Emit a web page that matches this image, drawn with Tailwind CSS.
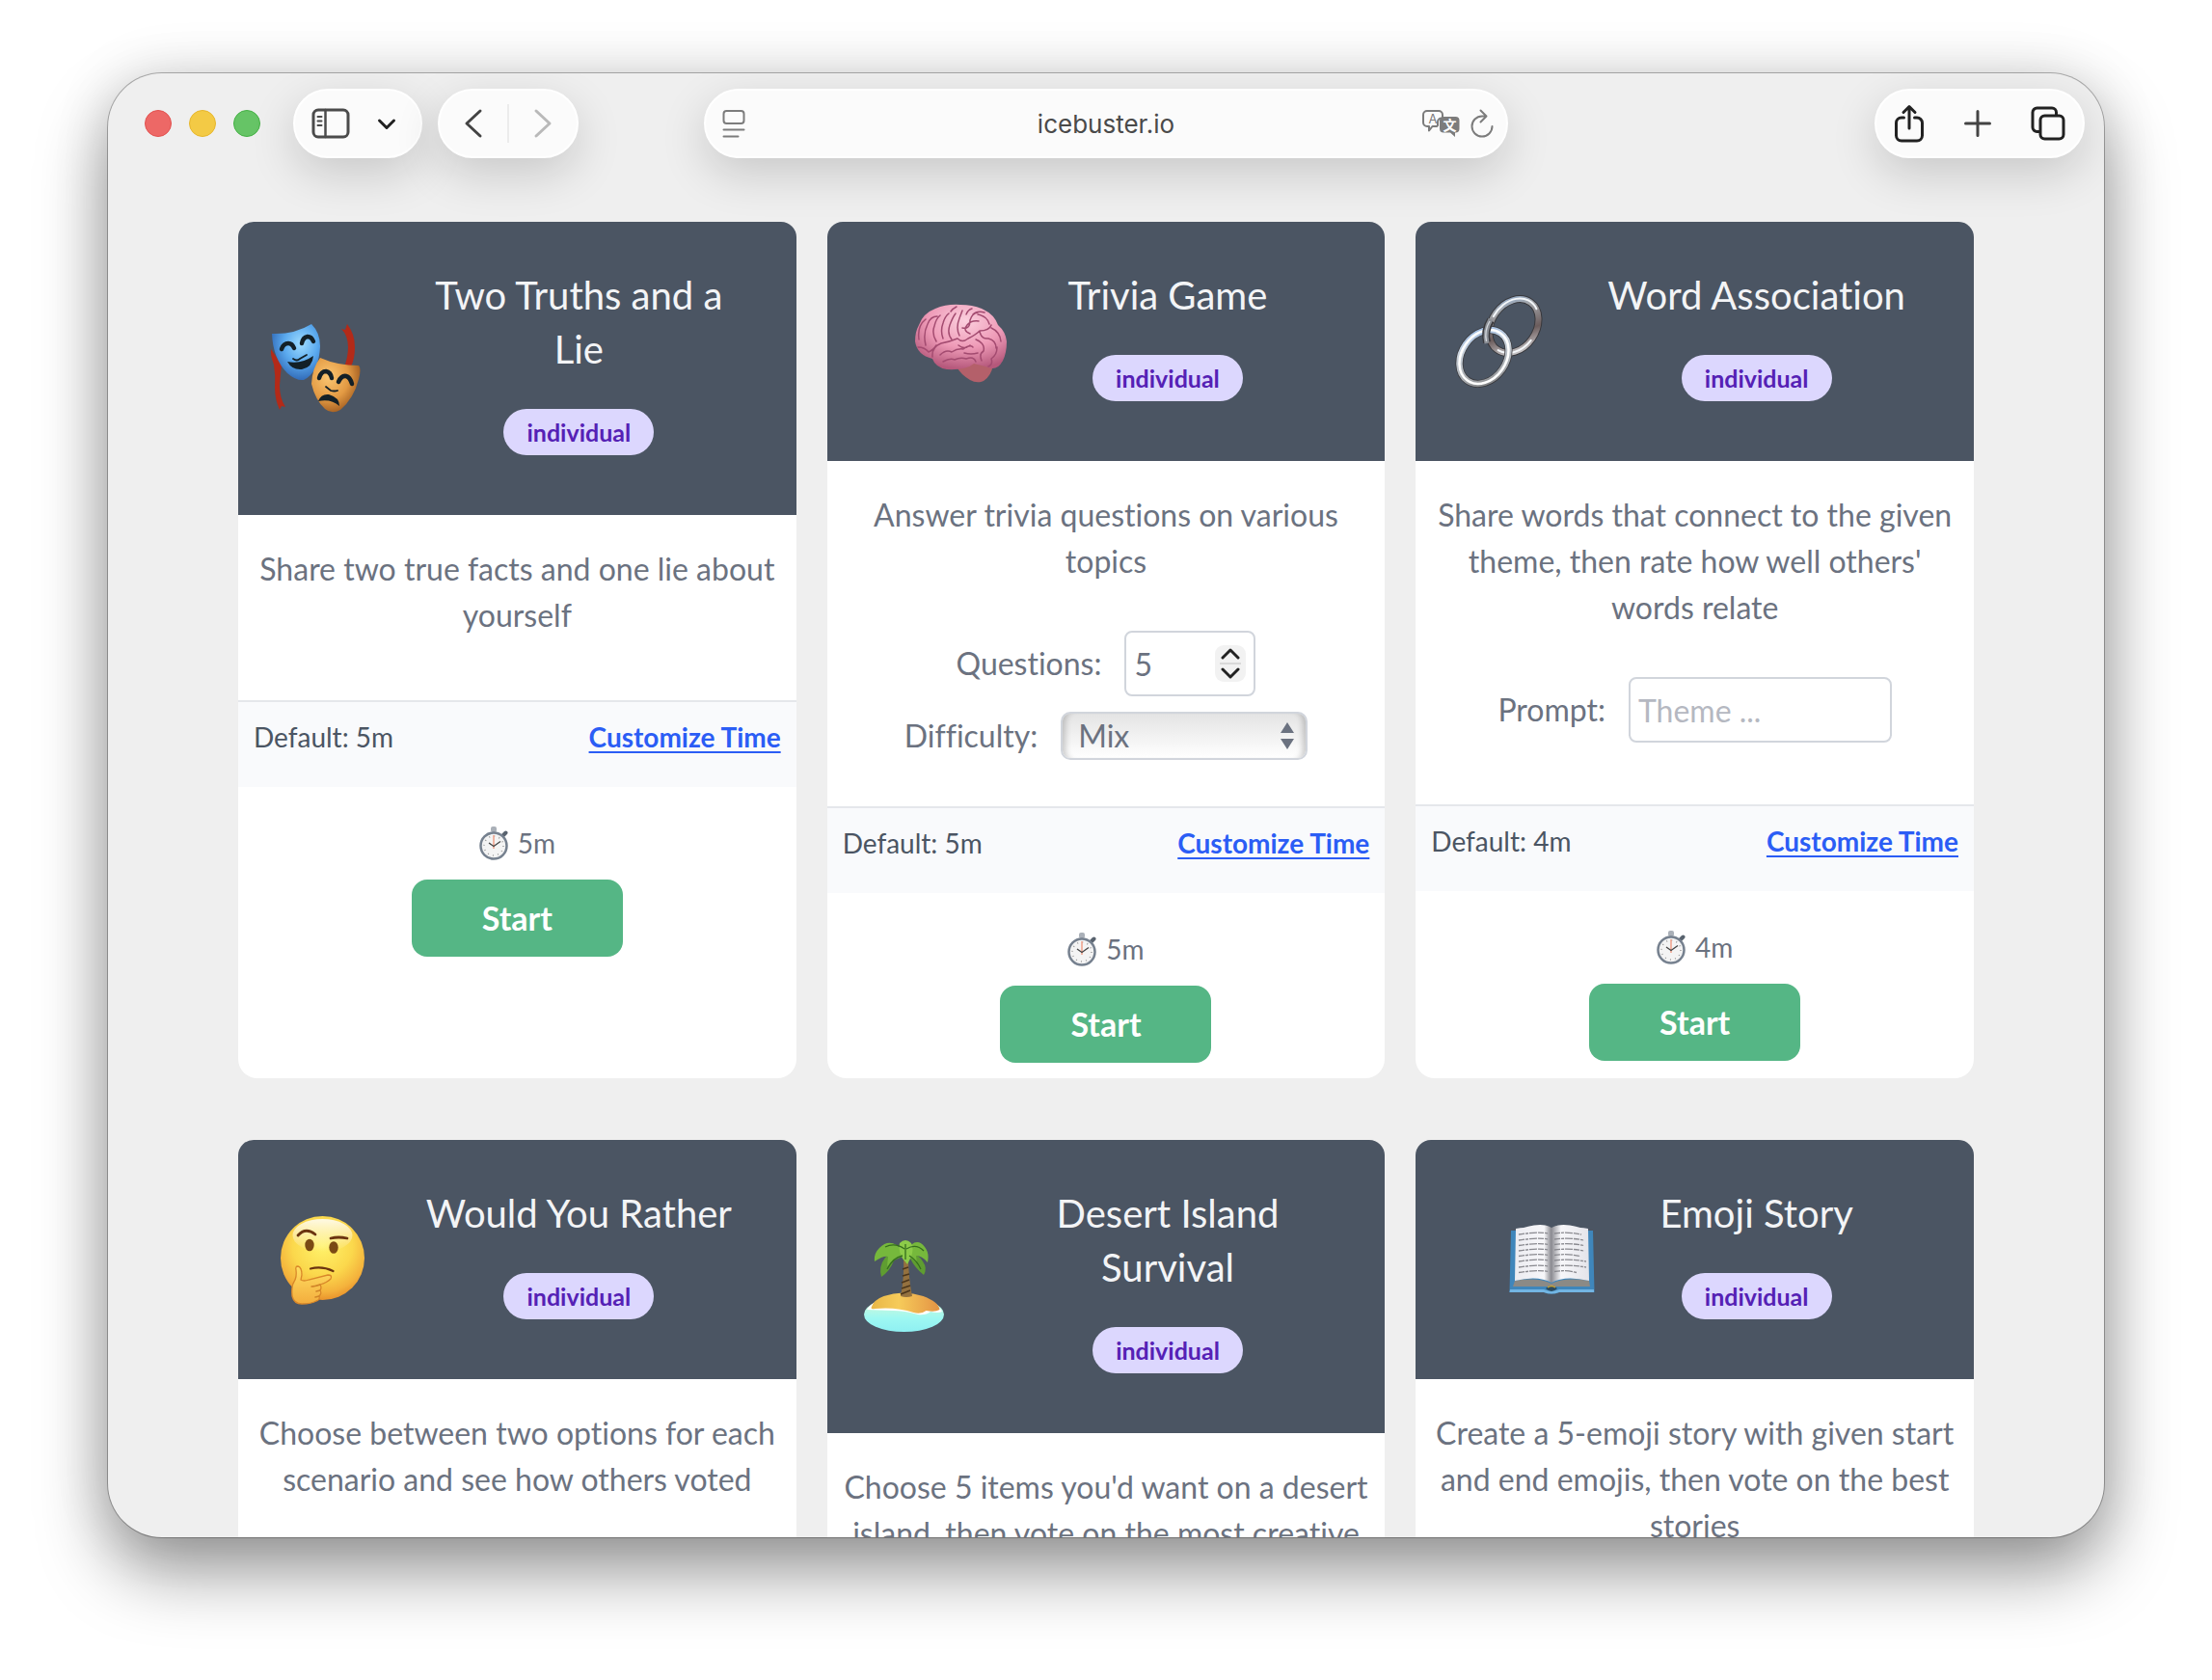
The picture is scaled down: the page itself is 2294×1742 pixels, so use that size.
<!DOCTYPE html>
<html lang="en">
<head>
<meta charset="utf-8">
<meta name="viewport" content="width=device-width, initial-scale=1">
<title>icebuster.io</title>
<script src="https://cdn.jsdelivr.net/npm/@tailwindcss/browser@4"></script>
</head>
<body class="bg-white font-['Lato',sans-serif] [font-variant-ligatures:no-common-ligatures]">

<!-- Shared drawings -->
<svg class="hidden" aria-hidden="true">
  <symbol id="stopwatch" viewBox="0 0 30 36">
    <rect x="12" y="1" width="6" height="6" rx="2" fill="#aab0b8"/>
    <path d="M25 10l2.500-2.500" stroke="#59636f" stroke-width="4" stroke-linecap="round"/>
    <circle cx="15" cy="21" r="13.500" fill="#f4f4f4" stroke="#76818f" stroke-width="2.500"/>
    <circle cx="15" cy="21" r="10" fill="none" stroke="#9b9b9b" stroke-width="1.500" stroke-dasharray="1 4.236"/>
    <path d="M15 24V10" stroke="#f0a08a" stroke-width="1.500"/>
    <path d="M10 18l5 3.500 7-5" fill="none" stroke="#444" stroke-width="1.300"/>
  </symbol>
</svg>

<div class="flex h-screen flex-col px-28 pt-19 pb-37">
  <div class="relative flex min-h-0 flex-1 flex-col overflow-hidden rounded-[56px] bg-[#efefef] shadow-[0_0_0_1px_rgba(0,0,0,0.28),0_36px_72px_rgba(0,0,0,0.40),0_0_60px_rgba(0,0,0,0.12)]">

    <!-- Browser toolbar -->
    <header class="grid shrink-0 grid-cols-[1fr_834px_1fr] items-center px-5 pt-4 font-['Inter',sans-serif]">
      <div class="flex items-center gap-4 pl-[18px]">
        <div class="mr-[18px] flex gap-[18px]">
          <button type="button" aria-label="Close" class="size-7 rounded-full border border-[#e2514f] bg-[#ed6866]"></button>
          <button type="button" aria-label="Minimize" class="size-7 rounded-full border border-[#e6b62c] bg-[#f3ca45]"></button>
          <button type="button" aria-label="Zoom" class="size-7 rounded-full border border-[#45b045] bg-[#66c466]"></button>
        </div>
        <div class="flex h-18 w-[134px] items-center rounded-full border-2 border-white bg-[#fbfbfb] pl-[17px] shadow-[0_16px_48px_rgba(0,0,0,0.16)]">
          <button type="button" aria-label="Sidebar" class="w-10">
            <svg class="block h-8 w-10" viewBox="0 0 40 32" fill="none" stroke="#4b4b4b" stroke-linecap="round">
              <rect x="2" y="2" width="36" height="28" rx="5" stroke-width="3"/>
              <path d="M14.500 2v28" stroke-width="2.500"/>
              <path d="M6.500 9h4M6.500 13.500h4M6.500 18h4" stroke-width="2"/>
            </svg>
          </button>
          <button type="button" aria-label="Tab groups" class="ml-7 w-5">
            <svg class="block h-5 w-5" viewBox="0 0 20 20" fill="none" stroke="#222" stroke-width="3" stroke-linecap="round" stroke-linejoin="round"><path d="M2.500 7L10 14.500 17.500 7"/></svg>
          </button>
        </div>
        <div class="flex h-18 w-[146px] items-center justify-between rounded-full border-2 border-white bg-[#fbfbfb] px-[25px] shadow-[0_16px_48px_rgba(0,0,0,0.16)]">
          <button type="button" aria-label="Back"><svg class="block h-8 w-5" viewBox="0 0 20 32" fill="none" stroke="#444" stroke-width="3" stroke-linecap="round" stroke-linejoin="round"><path d="M17 3L3 16l14 13"/></svg></button>
          <span class="h-10 w-0.5 bg-[#ececec]"></span>
          <button type="button" aria-label="Forward"><svg class="block h-8 w-5" viewBox="0 0 20 32" fill="none" stroke="#b9b9b9" stroke-width="3" stroke-linecap="round" stroke-linejoin="round"><path d="M3 3l14 13L3 29"/></svg></button>
        </div>
      </div>

      <div class="grid h-18 grid-cols-[96px_1fr_96px] items-center rounded-full border-2 border-white bg-[#fbfbfb] shadow-[0_16px_48px_rgba(0,0,0,0.16)]">
        <button type="button" aria-label="Page menu" class="pl-[17px]">
          <svg class="block h-8 w-6" viewBox="0 0 24 32" fill="none" stroke="#7c7c7c" stroke-width="2" stroke-linecap="round"><rect x="1.500" y="3" width="21" height="13" rx="3"/><path d="M1.500 22.500h21M1.500 29.500h15"/></svg>
        </button>
        <input type="text" aria-label="Address" value="icebuster.io" class="w-full min-w-0 bg-transparent text-center text-[26px] text-[#4a4a4a] outline-none">
        <div class="flex items-center justify-end gap-2.5 pr-[13px]">
          <button type="button" aria-label="Translate">
            <svg class="block h-8 w-10" viewBox="0 0 40 32" fill="none">
              <path d="M5 3h12a4 4 0 0 1 4 4v3.500h-1a4 4 0 0 0-4 4V18l-1 1h-4.500L7 23.500V19H5a4 4 0 0 1-4-4V7a4 4 0 0 1 4-4z" stroke="#7c7c7c" stroke-width="2" stroke-linejoin="round"/>
              <text x="11" y="16" text-anchor="middle" font-family="Inter, sans-serif" font-size="13" fill="#7c7c7c">A</text>
              <path d="M22 9h12.500a4 4 0 0 1 4 4v8.500a4 4 0 0 1-4 4H34V30l-5-4.500h-7a4 4 0 0 1-4-4V13a4 4 0 0 1 4-4z" fill="#7c7c7c"/>
              <text x="28.500" y="22.500" text-anchor="middle" font-family="Noto Sans CJK SC, sans-serif" font-weight="700" font-size="14" fill="#fff">文</text>
            </svg>
          </button>
          <button type="button" aria-label="Reload">
            <svg class="block h-8 w-6" viewBox="0 0 24 32" fill="none" stroke="#7c7c7c" stroke-width="2" stroke-linecap="round" stroke-linejoin="round"><path d="M12 8.500a10.500 10.500 0 1 0 10.500 10.500M10.500 2.500l6 6-6 6M12 8.500h4"/></svg>
          </button>
        </div>
      </div>

      <div class="flex h-18 w-[218px] items-center justify-between justify-self-end rounded-full border-2 border-white bg-[#fbfbfb] px-[18px] shadow-[0_16px_48px_rgba(0,0,0,0.16)]">
        <button type="button" aria-label="Share"><svg class="block h-10 w-8" viewBox="0 0 32 40" fill="none" stroke="#222" stroke-width="3" stroke-linecap="round" stroke-linejoin="round"><path d="M10.500 14H8a5.500 5.500 0 0 0-5.500 5.500v13A5.500 5.500 0 0 0 8 38h16a5.500 5.500 0 0 0 5.500-5.500v-13A5.500 5.500 0 0 0 24 14h-2.500M16 25V3M10 8.500L16 2.500l6 6"/></svg></button>
        <button type="button" aria-label="New tab"><svg class="block size-7" viewBox="0 0 28 28" fill="none" stroke="#444" stroke-width="3" stroke-linecap="round"><path d="M14 1.500v25M1.500 14h25"/></svg></button>
        <button type="button" aria-label="Tab overview"><svg class="block size-9" viewBox="0 0 36 36" fill="none" stroke="#222" stroke-width="3" stroke-linejoin="round"><rect x="10" y="10" width="24" height="24" rx="4.500"/><path d="M10 26.500H6.500A4.500 4.500 0 0 1 2 22V6.500A4.500 4.500 0 0 1 6.500 2H22a4.500 4.500 0 0 1 4.500 4.500V10"/></svg></button>
      </div>
    </header>

    <!-- Game cards -->
    <main class="mx-auto grid w-full max-w-[1800px] grid-cols-3 gap-x-8 gap-y-16 pt-[66px] text-center text-[32px] leading-12 text-[#6b7280]">

      <article class="flex flex-col rounded-[20px] bg-white">
        <div class="flex items-center justify-center gap-8 rounded-t-2xl bg-[#4b5563] px-8 py-12">
          <svg class="size-24 shrink-0 overflow-visible" viewBox="0 0 96 96" role="img" aria-label="Theatre masks">
            <defs>
              <radialGradient id="mb" cx=".6" cy=".35" r=".7"><stop offset="0" stop-color="#9fdcff"/><stop offset=".5" stop-color="#5aa9ee"/><stop offset="1" stop-color="#2c62b0"/></radialGradient>
              <radialGradient id="mo" cx=".35" cy=".35" r=".75"><stop offset="0" stop-color="#fbc672"/><stop offset=".55" stop-color="#e39a43"/><stop offset="1" stop-color="#93501a"/></radialGradient>
            </defs>
            <path d="M2 28q-1 6 3 16 2 12 1 24 0 12 5 23l2-4 4 1q-6-9-6-22 1-13 2-22z" fill="#b32a18"/>
            <path d="M75 7l4 1 2-6q8 10 8 24 0 12-4 20l-6-2q3-10 3-18 0-12-7-19z" fill="#b32a18"/>
            <path d="M3 12Q26 13 44 2q9 9 9 23-1 27-17 35-8 1-17-7Q4 38 3 12z" fill="url(#mb)"/>
            <path d="M53 37q18 8 40 8 3 3 0 14-5 20-19 32-9 5-16-1-10-9-14-26 1-17 9-27z" fill="url(#mo)"/>
            <g fill="none" stroke="#132027" stroke-linecap="round">
              <path d="M13 28q2-6 7-6 4 0 6 5M34 22q1-6 6-7 4 0 6 5M52 58q2-7 7-7 5 1 6 7M72 62q3-7 8-6 4 1 6 8" stroke-width="4.500"/>
              <path d="M25 38q4 3 7 0l7-4M59 67l5 4q4 1 7 0" stroke-width="1.800"/>
            </g>
            <path d="M19 41q14 3 27-6-1 12-12 14-10 1-15-8zM51 82q3-8 11-7 11 3 11 12-9-8-22-5z" fill="#132027"/>
          </svg>
          <div class="px-8 pb-3.5">
            <h2 class="text-[40px] leading-14 text-gray-100">Two Truths and a Lie</h2>
            <span class="mx-auto mt-[34px] block h-12 w-fit rounded-full bg-[#dcd7fe] px-6 text-[25px] leading-12 font-bold text-[#5521b5]">individual</span>
          </div>
        </div>
        <div class="px-4 pt-8 pb-12"><p class="mb-4">Share two true facts and one lie about yourself</p></div>
        <div class="flex justify-between border-t-2 border-gray-200 bg-[#f9fafc] px-4 pt-4 pb-8 text-[28px] leading-10">
          <span class="text-[#4b5563]">Default: 5m</span>
          <a href="#" class="font-bold text-[#2b5df5] underline decoration-2 underline-offset-4">Customize Time</a>
        </div>
        <div class="flex flex-col items-center pb-4">
          <div class="flex h-24 items-center gap-2.5 pt-5 text-[28px]"><svg class="h-9 w-[30px]" role="img" aria-label="Time"><use href="#stopwatch"/></svg>5m</div>
          <button type="button" class="h-20 w-[219px] rounded-2xl bg-[#55b685] text-[34px] font-bold text-white">Start</button>
        </div>
      </article>

      <article class="flex flex-col rounded-[20px] bg-white">
        <div class="flex items-center justify-center gap-8 rounded-t-2xl bg-[#4b5563] px-8 py-12">
          <svg class="size-24 shrink-0" viewBox="0 0 96 96" role="img" aria-label="Brain">
            <defs><radialGradient id="br" cx=".55" cy=".25" r=".75"><stop offset="0" stop-color="#fbd0de"/><stop offset=".55" stop-color="#ee9ab7"/><stop offset="1" stop-color="#b5587b"/></radialGradient></defs>
            <path d="M44 74q8-8 24-6l14 4q-2 12-10 17-7 3-14-1-10-6-14-14z" fill="#b4606a"/>
            <path d="M1 48Q1 38 5 31 9 19 22 14 34 9 48 10q14 0 24 5 11 5 15 16 8 7 9 17 0 12-4 20-5 9-12 8-10-3-18-5-8 7-28 6-12-2-15-11Q3 62 1 48z" fill="url(#br)"/>
            <g fill="none" stroke="#a34b70" stroke-width="1.500" stroke-linecap="round" stroke-linejoin="round">
              <path d="M5 46q-2-14 7-21M12 52q-3-12 2-22 3-8 10-8M23 48q-5-8-2-16 2-8 6-11M30 45q-3-8 0-16 2-7 6-10M39 46q-5-6-2-15 3-8 6-12M47 42q-4-8 0-18l3-8M50 34q8 2 8-8 2-7 8-8M58 40q-8-3-3-9 4-5 12-4M66 20q10 2 12 10M60 14q-4 1-6 6M44 12q-4 2-6 5M73 18q-8-2-12 2"/>
              <path d="M19 64q-1-10 9-14 10-2 17-5 5 5 11 0 8-4 12-8 10 0 12-6M4 54q7 0 11 5 5-2 8-7M68 38q2 8 9 7 8 2 8 10M64 46q10 4 8 12-5 3-2 10M52 60q7 2 14 0M27 62q6-6 12-3 6-4 12-3 7-5 10-2M30 69q7-4 12-2 6-3 12-1 8-3 10 3M80 34q9 4 10 14M86 54q0 8-6 12 2 6-3 8M46 52q6 5 12 0"/>
            </g>
          </svg>
          <div class="px-8 pb-3.5">
            <h2 class="text-[40px] leading-14 text-gray-100">Trivia Game</h2>
            <span class="mx-auto mt-[34px] block h-12 w-fit rounded-full bg-[#dcd7fe] px-6 text-[25px] leading-12 font-bold text-[#5521b5]">individual</span>
          </div>
        </div>
        <div class="px-4 pt-8 pb-12">
          <p>Answer trivia questions on various topics</p>
          <div class="mt-12 flex items-center justify-center gap-6">
            <label for="questions">Questions:</label>
            <div class="relative h-17 w-[136px]">
              <input id="questions" type="number" value="5" class="h-full w-full rounded-lg border-2 border-gray-300 bg-white pr-12 pl-2 outline-none [appearance:textfield]">
              <svg class="pointer-events-none absolute top-[15px] right-2.5 h-[38px] w-8" viewBox="0 0 32 38" fill="none"><rect width="32" height="38" rx="9" fill="#f2f2f2"/><path d="M5 19h22" stroke="#d9d9d9" stroke-width="2"/><path d="M8 13l8-8 8 8M8 25l8 8 8-8" stroke="#222" stroke-width="3" stroke-linecap="round" stroke-linejoin="round"/></svg>
            </div>
          </div>
          <div class="mt-4 flex items-center justify-center gap-6">
            <label for="difficulty">Difficulty:</label>
            <div class="relative h-[50px] w-64">
              <select id="difficulty" class="h-full w-full appearance-none rounded-[10px] border-2 border-gray-300 bg-linear-to-b from-[#e4e4e4] to-white px-4 leading-10 shadow-[inset_8px_0_6px_-5px_rgba(0,0,0,0.2),inset_-8px_0_6px_-5px_rgba(0,0,0,0.2)] outline-none"><option>Mix</option></select>
              <svg class="pointer-events-none absolute top-[11px] right-3.5 h-7 w-3.5" viewBox="0 0 14 28" fill="#6b7280"><path d="M7 0l7 11H0zM7 28l7-11H0z"/></svg>
            </div>
          </div>
        </div>
        <div class="flex justify-between border-t-2 border-gray-200 bg-[#f9fafc] px-4 pt-4 pb-8 text-[28px] leading-10">
          <span class="text-[#4b5563]">Default: 5m</span>
          <a href="#" class="font-bold text-[#2b5df5] underline decoration-2 underline-offset-4">Customize Time</a>
        </div>
        <div class="flex flex-col items-center pb-4">
          <div class="flex h-24 items-center gap-2.5 pt-5 text-[28px]"><svg class="h-9 w-[30px]" role="img" aria-label="Time"><use href="#stopwatch"/></svg>5m</div>
          <button type="button" class="h-20 w-[219px] rounded-2xl bg-[#55b685] text-[34px] font-bold text-white">Start</button>
        </div>
      </article>

      <article class="flex flex-col rounded-[20px] bg-white">
        <div class="flex items-center justify-center gap-8 rounded-t-2xl bg-[#4b5563] px-8 py-12">
          <svg class="size-24 shrink-0" viewBox="0 0 96 96" fill="none" role="img" aria-label="Link">
            <defs>
              <linearGradient id="l1" x1="0" y1="0" x2="1" y2="1"><stop offset="0" stop-color="#8fb0d8"/><stop offset=".25" stop-color="#a4a7ac"/><stop offset=".6" stop-color="#6b5c5c"/><stop offset="1" stop-color="#eceff2"/></linearGradient>
              <linearGradient id="l2" x1="0" y1="0" x2="1" y2="1"><stop offset="0" stop-color="#8fb5e6"/><stop offset=".35" stop-color="#c9d2dc"/><stop offset=".75" stop-color="#a5a8ac"/><stop offset="1" stop-color="#6d6d6d"/></linearGradient>
            </defs>
            <g transform="rotate(35 63 32)"><ellipse cx="63" cy="32" rx="23" ry="30" stroke="#38383c" stroke-width="8"/><ellipse cx="63" cy="32" rx="23" ry="30" stroke="url(#l1)" stroke-width="6"/><path d="M40 36a23 30 0 0 1 32-32M86 34a23 30 0 0 1-22 28" stroke="#f4f7fa" stroke-width="2" stroke-linecap="round"/></g>
            <g transform="rotate(35 32 64)"><ellipse cx="32" cy="64" rx="23" ry="30" stroke="#38383c" stroke-width="8"/><ellipse cx="32" cy="64" rx="23" ry="30" stroke="url(#l2)" stroke-width="6.500"/><ellipse cx="32" cy="64" rx="23" ry="30" stroke="#fff" stroke-width="2.500"/></g>
            <path d="M39 26q-7 11-4 23" stroke="#38383c" stroke-width="8"/><path d="M39 25q-7 12-4 25" stroke="#8b8f96" stroke-width="5"/><path d="M38 27q-6 10-3.500 21" stroke="#d5d9de" stroke-width="1.300"/>
          </svg>
          <div class="px-8 pb-3.5">
            <h2 class="text-[40px] leading-14 text-gray-100">Word Association</h2>
            <span class="mx-auto mt-[34px] block h-12 w-fit rounded-full bg-[#dcd7fe] px-6 text-[25px] leading-12 font-bold text-[#5521b5]">individual</span>
          </div>
        </div>
        <div class="px-4 pt-8 pb-12">
          <p>Share words that connect to the given theme, then rate how well others' words relate</p>
          <div class="mt-12 mb-4 flex items-center justify-center gap-6">
            <label for="prompt">Prompt:</label>
            <input id="prompt" type="text" placeholder="Theme ..." class="h-17 w-[273px] rounded-lg border-2 border-gray-300 bg-white px-2 outline-none placeholder:text-[#b5b8c1]">
          </div>
        </div>
        <div class="flex justify-between border-t-2 border-gray-200 bg-[#f9fafc] px-4 pt-4 pb-8 text-[28px] leading-10">
          <span class="text-[#4b5563]">Default: 4m</span>
          <a href="#" class="font-bold text-[#2b5df5] underline decoration-2 underline-offset-4">Customize Time</a>
        </div>
        <div class="flex flex-col items-center pb-4">
          <div class="flex h-24 items-center gap-2.5 pt-5 text-[28px]"><svg class="h-9 w-[30px]" role="img" aria-label="Time"><use href="#stopwatch"/></svg>4m</div>
          <button type="button" class="h-20 w-[219px] rounded-2xl bg-[#55b685] text-[34px] font-bold text-white">Start</button>
        </div>
      </article>

      <article class="flex flex-col rounded-[20px] bg-white">
        <div class="flex items-center justify-center gap-8 rounded-t-2xl bg-[#4b5563] px-8 py-12">
          <svg class="size-24 shrink-0 overflow-visible" viewBox="0 0 96 96" role="img" aria-label="Thinking face">
            <defs>
              <radialGradient id="tf" cx=".5" cy=".35" r=".65"><stop offset="0" stop-color="#fff36b"/><stop offset=".55" stop-color="#fbd84c"/><stop offset=".85" stop-color="#f4b23c"/><stop offset="1" stop-color="#e9932c"/></radialGradient>
              <linearGradient id="th" x1="0" y1="0" x2="0" y2="1"><stop offset="0" stop-color="#ffdf63"/><stop offset="1" stop-color="#f3ad3d"/></linearGradient>
              <linearGradient id="tg" x1="0" y1="0" x2="0" y2="1"><stop offset="0" stop-color="#fff" stop-opacity=".85"/><stop offset="1" stop-color="#fff" stop-opacity="0"/></linearGradient>
            </defs>
            <circle cx="52.500" cy="46.500" r="43.500" fill="url(#tf)"/>
            <ellipse cx="52.500" cy="23" rx="31" ry="17" fill="url(#tg)"/>
            <g fill="none" stroke="#6b3410" stroke-linecap="round"><path d="M27 23q8-9 18-1M61 26q8-2 17 0" stroke-width="2.800"/><path d="M40 57.500q12-3 23.500 2.500" stroke-width="2.200"/></g>
            <ellipse cx="39" cy="33" rx="4.700" ry="6.300" fill="#7a4a14"/><ellipse cx="64" cy="35.500" rx="4.700" ry="6.300" fill="#7a4a14"/>
            <path d="M25 59q-1-4 2-4 4 1 4 9l-1 5q3 2 8 0l20-5q5 0 3 4-4 4-11 6 2 3 0 6 2 3-1 6 1 4-3 5-5 3-15 3-8 0-10-8-1-11 2-15 3-5 2-12z" fill="url(#th)" stroke="#d9882a" stroke-width="1.300"/>
            <path d="M50 74q-6 2-9 2M50 80l-4 1M49 86l-4 1" stroke="#d08428" stroke-width="1.500" fill="none" stroke-linecap="round"/>
          </svg>
          <div class="px-8 pb-3.5">
            <h2 class="text-[40px] leading-14 text-gray-100">Would You Rather</h2>
            <span class="mx-auto mt-[34px] block h-12 w-fit rounded-full bg-[#dcd7fe] px-6 text-[25px] leading-12 font-bold text-[#5521b5]">individual</span>
          </div>
        </div>
        <div class="px-4 pt-8 pb-12"><p>Choose between two options for each scenario and see how others voted</p></div>
      </article>

      <article class="flex flex-col rounded-[20px] bg-white">
        <div class="flex items-center justify-center gap-8 rounded-t-2xl bg-[#4b5563] px-8 py-12">
          <svg class="size-24 shrink-0" viewBox="0 0 96 96" role="img" aria-label="Desert island">
            <defs>
              <linearGradient id="sa" x1="0" x2="1"><stop offset="0" stop-color="#e8b646"/><stop offset=".4" stop-color="#f6cb5a"/><stop offset="1" stop-color="#e49344"/></linearGradient>
              <linearGradient id="wa" x1="0" y1="0" x2="0" y2="1"><stop offset="0" stop-color="#e2f7cf"/><stop offset=".6" stop-color="#9ef8f2"/><stop offset="1" stop-color="#8ff0f2"/></linearGradient>
            </defs>
            <ellipse cx="47.500" cy="77" rx="41.500" ry="18" fill="url(#wa)"/>
            <path d="M9 72q4-6 9-8l58 1q9 4 11 9-4 2-12 0-5 4-13 3-14-4-26-4z" fill="#fff"/>
            <path d="M13.500 70q2-8 13-12 20-7 41 0 16 6 17 14-5 3-14 1-5 4-13 2-18-6-40-4-4 1-4-1z" fill="url(#sa)"/>
            <path d="M47 18h5q0 20 4 40-6 2-12 0 4-20 3-40z" fill="#94713f"/>
            <path d="M46 30l6-2M46 37l7-2M45 44l8-3M45 50l9-3M44 56l10-4" stroke="#4b351a" stroke-width="1.500"/>
            <path d="M48 16Q38 8 28 18q-7 9-4 20 9-6 13-17M50 16q11-4 17 6 5 7 1 14-9-7-14-17" fill="#5f9d31"/>
            <path d="M47 12Q34-4 22 8q-6 6-5 14 9-6 14-5l-1 10q9-8 18-13M49 12Q60-5 69 7q5 6 3 16-6-7-12-7l1 8q-7-7-12-10" fill="#76b83c"/>
            <path d="M43 3q6-6 12 0 3 6 0 14l-4 8-5-6q-5-8-3-16z" fill="#8ccb49"/>
            <path d="M48 9Q38 2 28 7M50 9q10-6 18 2M49 4v16M46 16q-10 2-16 14M53 16q8 5 12 14" fill="none" stroke="#356d1e" stroke-width="1.300"/>
          </svg>
          <div class="px-8 pb-3.5">
            <h2 class="text-[40px] leading-14 text-gray-100">Desert Island Survival</h2>
            <span class="mx-auto mt-[34px] block h-12 w-fit rounded-full bg-[#dcd7fe] px-6 text-[25px] leading-12 font-bold text-[#5521b5]">individual</span>
          </div>
        </div>
        <div class="px-4 pt-8 pb-12"><p>Choose 5 items you'd want on a desert island, then vote on the most creative</p></div>
      </article>

      <article class="flex flex-col rounded-[20px] bg-white">
        <div class="flex items-center justify-center gap-8 rounded-t-2xl bg-[#4b5563] px-8 py-12">
          <svg class="size-24 shrink-0" viewBox="0 0 96 96" role="img" aria-label="Open book">
            <defs>
              <linearGradient id="pl" x1="0" x2="1"><stop offset="0" stop-color="#ececf1"/><stop offset=".8" stop-color="#f7f7fa"/><stop offset="1" stop-color="#86868c"/></linearGradient>
              <linearGradient id="pr" x1="0" x2="1"><stop offset="0" stop-color="#8d8d93"/><stop offset=".25" stop-color="#f7f7fa"/><stop offset="1" stop-color="#e4e4ea"/></linearGradient>
            </defs>
            <path d="M6 18h85l1.500 64H56q-8 3-16 0H4.500z" fill="#3f86bb"/>
            <path d="M5 79h35q8 3 16 0h36v3H56q-8 3-16 0H4.500z" fill="#72b5e3"/>
            <path d="M10 70q24-4 38 3 14-7 39-3l1 6H52q-4 2-8 0H8z" fill="#8b8a86"/>
            <path d="M11 16q5-1 8-1 20-6 29 0v57q-14-8-38-2z" fill="url(#pl)"/>
            <path d="M86 16q-5-1-8-1-20-6-30 0v57q14-8 39-2z" fill="url(#pr)"/>
            <path d="M14 22q20-3 31-1M14 28q20-3 31-1M14 33.500q20-3 31-1M14 39q20-3 31-1M14 44.500q20-3 31-1M14 50q20-3 31-1M14 56q20-3 31-1M14 61.500q20-3 31-1M51 21q14-2 28 1M51 27q16-2 31 1M51 32.500q16-2 31 1M51 38q16-2 31 1M51 43.500q13-2 27 1M51 49q16-2 33 1M51 55q16-2 33 1M51 60.500q12-2 23 1" stroke="#8a8a90" stroke-width="1.300" stroke-dasharray="6 1 3 1 8 1" fill="none"/>
            <path d="M42 78q6-6 12 0-6 6-12 0z" fill="#2b4a5e"/><path d="M44 77q4-3 8 0" stroke="#c9a437" stroke-width="1.500" fill="none"/>
          </svg>
          <div class="px-8 pb-3.5">
            <h2 class="text-[40px] leading-14 text-gray-100">Emoji Story</h2>
            <span class="mx-auto mt-[34px] block h-12 w-fit rounded-full bg-[#dcd7fe] px-6 text-[25px] leading-12 font-bold text-[#5521b5]">individual</span>
          </div>
        </div>
        <div class="px-4 pt-8 pb-12"><p>Create a 5-emoji story with given start and end emojis, then vote on the best stories</p></div>
      </article>
    </main>
  </div>
</div>
</body>
</html>
